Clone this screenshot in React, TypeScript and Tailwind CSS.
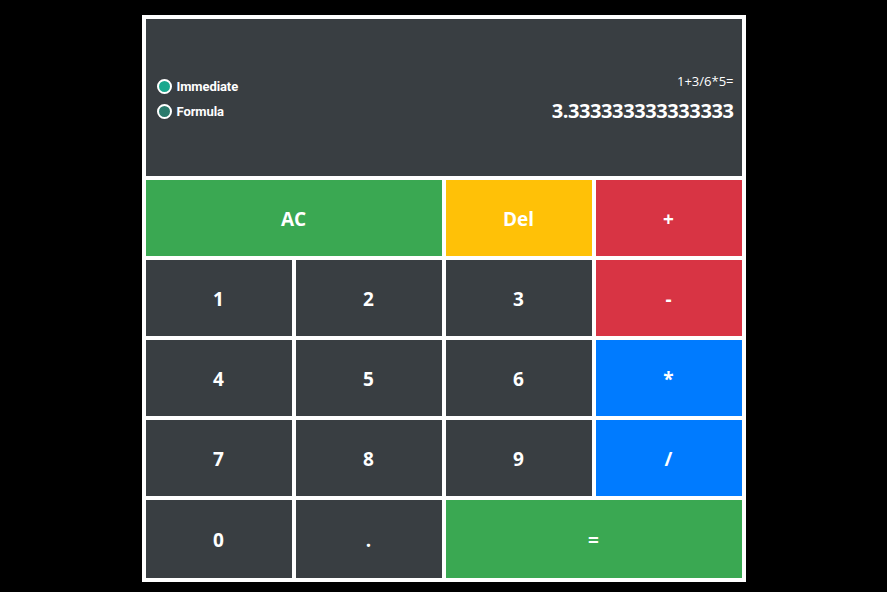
import React from "react";

const btn = "flex items-center justify-center text-white font-bold text-[19px] h-[76px] pt-[2px]";
const dark = "bg-[#393e42]";

export default function App() {
  return (
    <div className="min-h-[592px] w-full bg-black flex justify-center pt-[15px]" style={{ fontFamily: '"Open Sans", "Noto Sans", sans-serif' }}>
      <div className="w-[604px] bg-white p-[4px] flex flex-col gap-[4px] h-[567px]">
        <div className={`${dark} h-[157px] flex items-center justify-between pl-[11px] pr-[8px]`}>
          <div className="flex flex-col gap-[6px] mt-[3px]" style={{ fontFamily: 'Roboto, sans-serif' }}>
            <label className="flex items-center gap-[5px] text-white text-[13px] font-bold tracking-[-0.1px]">
              <span className="w-[15px] h-[15px] rounded-full border-2 border-white bg-[#19a88e]" />
              Immediate
            </label>
            <label className="flex items-center gap-[5px] text-white text-[13px] font-bold tracking-[-0.1px]">
              <span className="w-[15px] h-[15px] rounded-full border-2 border-white bg-[#2a7a6c]" />
              Formula
            </label>
          </div>
          <div className="flex flex-col items-end gap-[8px] text-white mt-[1px]">
            <div className="text-[13px] leading-[18px]">1+3/6*5=</div>
            <div className="text-[20px] font-bold leading-[26px] tracking-[-0.4px]">3.333333333333333</div>
          </div>
        </div>
        <div className="grid grid-cols-4 gap-[4px] flex-1">
          <div className={`${btn} col-span-2 bg-[#3aa852]`}>AC</div>
          <div className={`${btn} bg-[#ffc107]`}>Del</div>
          <div className={`${btn} bg-[#d83444]`}>+</div>
          <div className={`${btn} ${dark}`}>1</div>
          <div className={`${btn} ${dark}`}>2</div>
          <div className={`${btn} ${dark}`}>3</div>
          <div className={`${btn} bg-[#d83444]`}>-</div>
          <div className={`${btn} ${dark}`}>4</div>
          <div className={`${btn} ${dark}`}>5</div>
          <div className={`${btn} ${dark}`}>6</div>
          <div className={`${btn} bg-[#007bff]`}>*</div>
          <div className={`${btn} ${dark}`}>7</div>
          <div className={`${btn} ${dark}`}>8</div>
          <div className={`${btn} ${dark}`}>9</div>
          <div className={`${btn} bg-[#007bff]`}>/</div>
          <div className={`${btn} ${dark} h-[78px]`}>0</div>
          <div className={`${btn} ${dark} h-[78px]`}>.</div>
          <div className={`${btn} col-span-2 bg-[#3aa852] h-[78px]`}>=</div>
        </div>
      </div>
    </div>
  );
}
